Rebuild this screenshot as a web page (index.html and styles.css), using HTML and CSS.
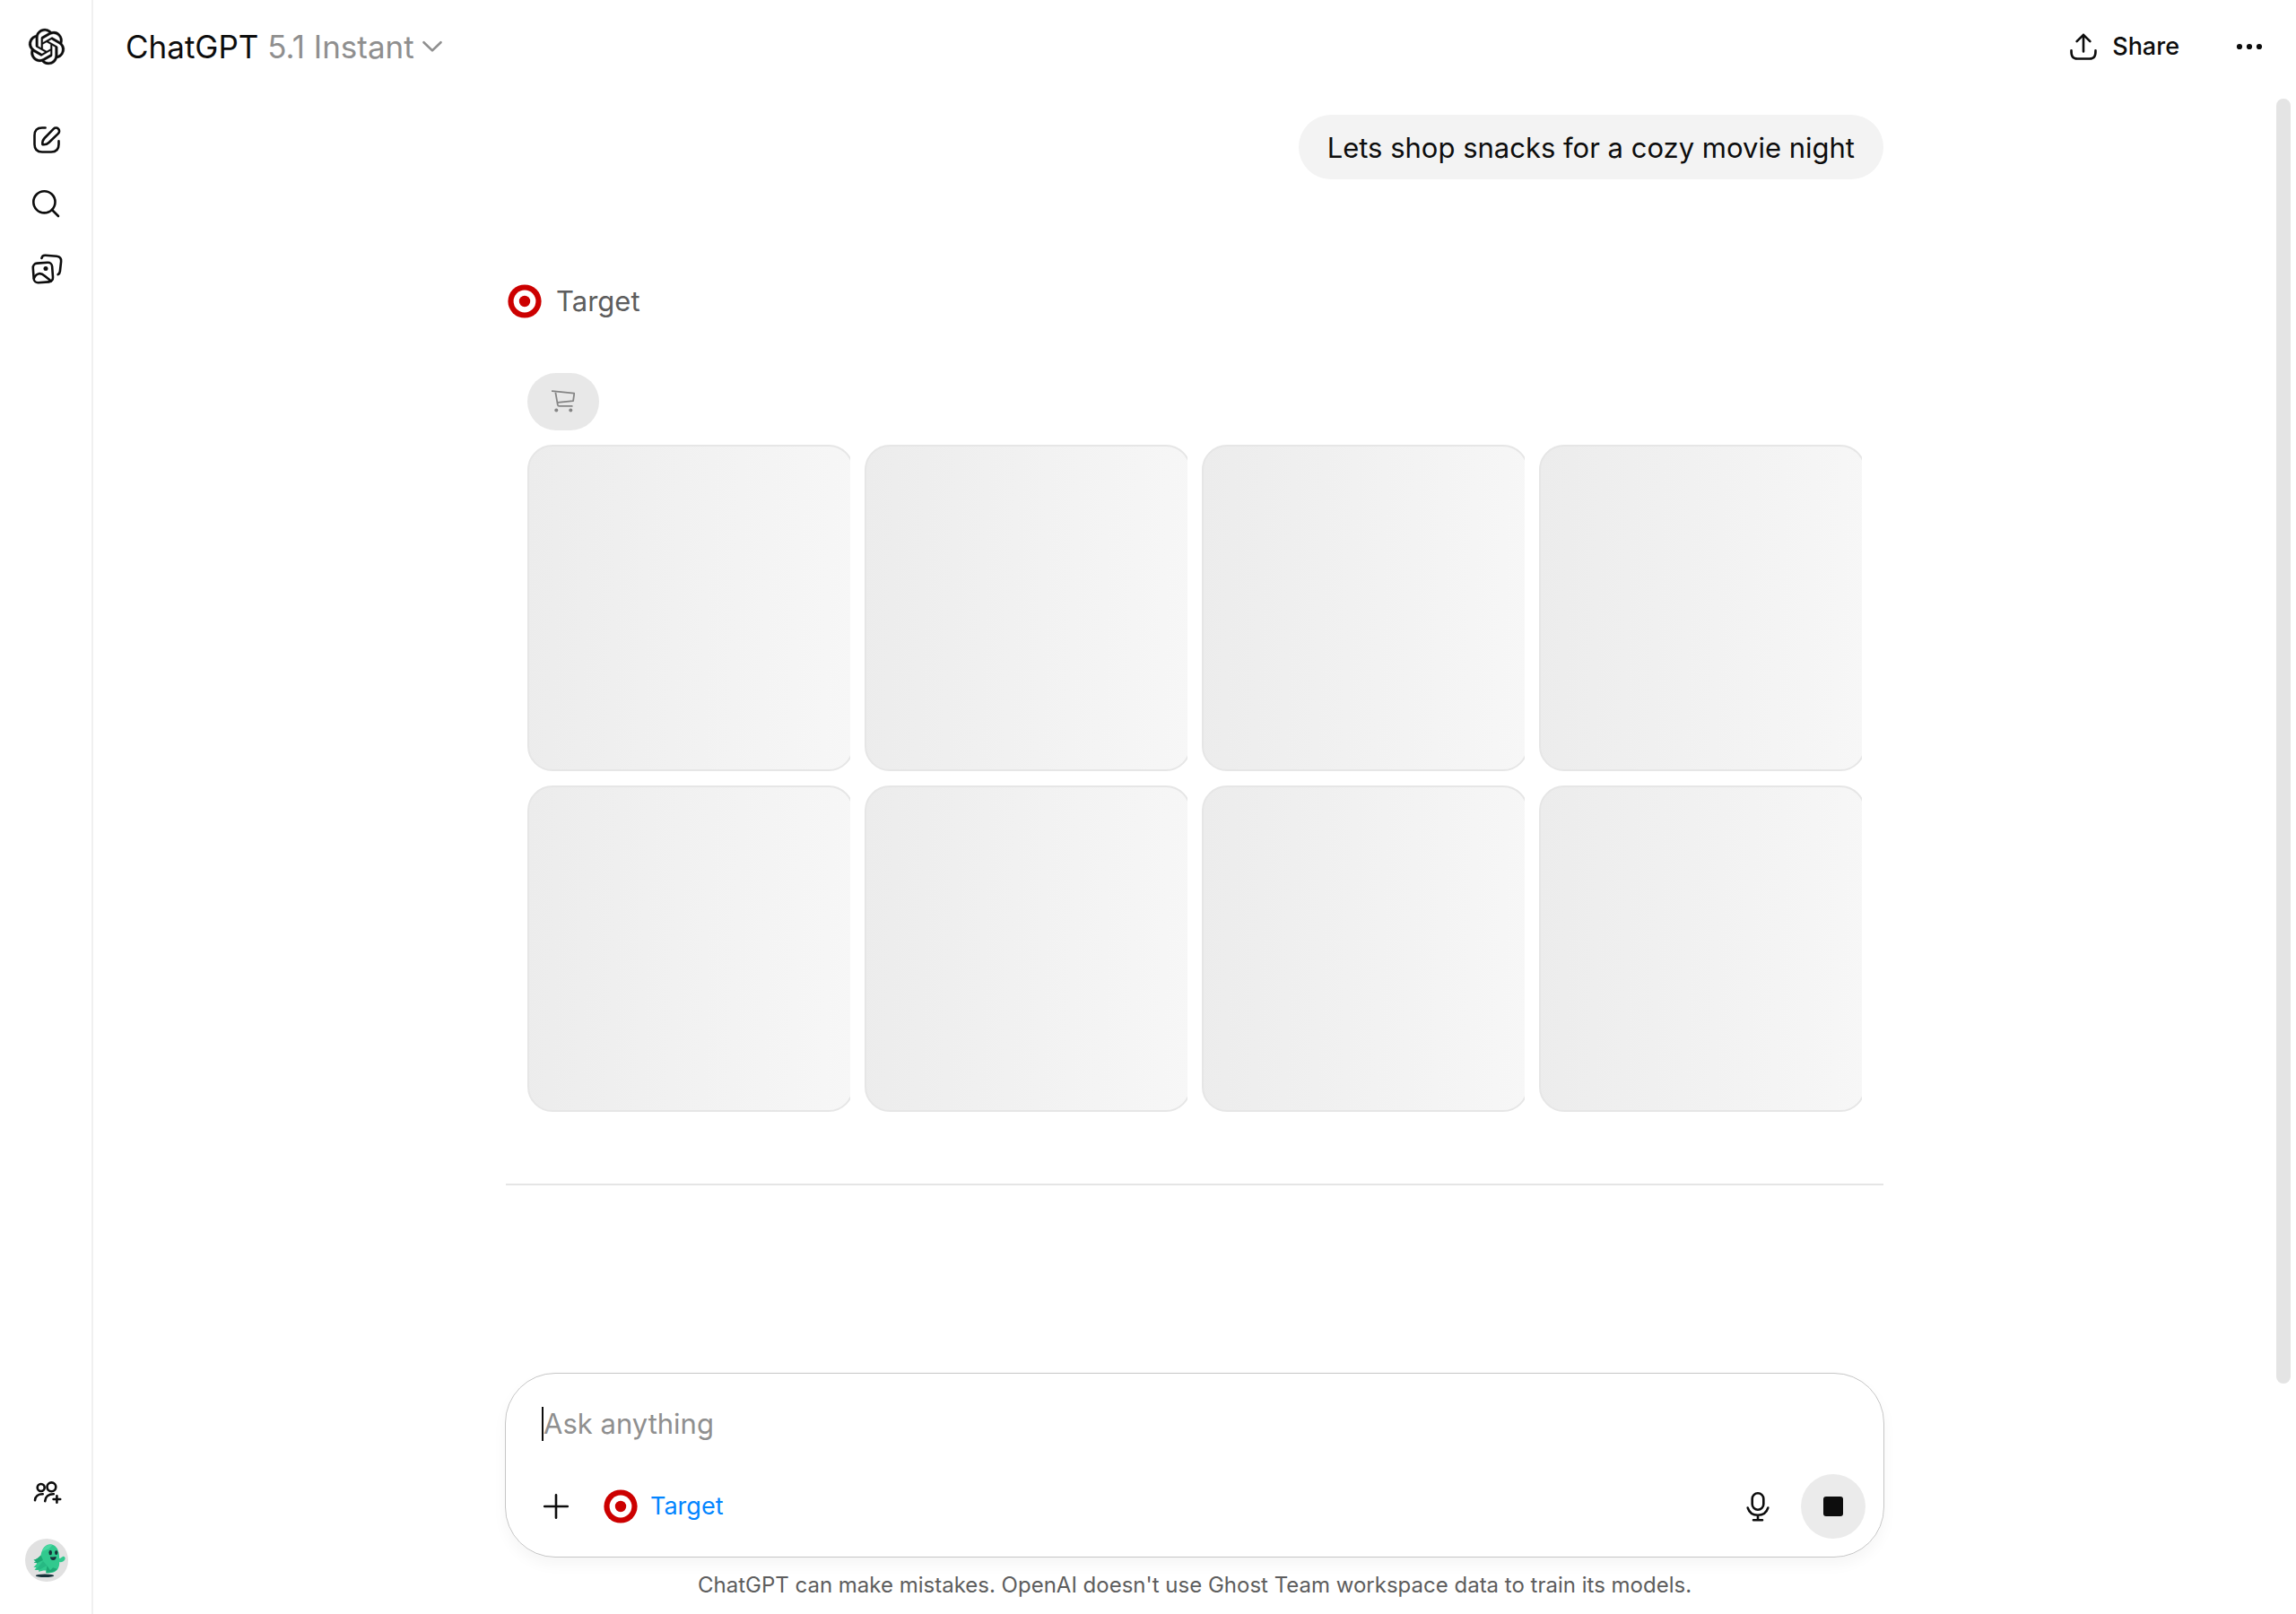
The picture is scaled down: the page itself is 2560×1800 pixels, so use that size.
FILE: index.html
```html
<!DOCTYPE html>
<html lang="en">
<head>
<meta charset="utf-8">
<meta name="viewport" content="width=device-width, initial-scale=1">
<title>ChatGPT</title>
<link rel="stylesheet" href="styles.css">
</head>
<body>
<svg class="defs" aria-hidden="true">
  <symbol id="bullseye" viewBox="0 0 38 38">
    <circle cx="19" cy="19" r="18.6" fill="#cc0000"/>
    <circle cx="19" cy="19" r="12.4" fill="#fff"/>
    <circle cx="19" cy="19" r="6.2" fill="#cc0000"/>
  </symbol>
</svg>
<div class="app">
  <nav class="sidebar" aria-label="Main">
    <a class="home" href="#" aria-label="Home">
      <svg class="logo" viewBox="0 0 24 24" fill="currentColor"><path d="M22.2819 9.8211a5.9847 5.9847 0 0 0-.5157-4.9108 6.0462 6.0462 0 0 0-6.5098-2.9A6.0651 6.0651 0 0 0 4.9807 4.1818a5.9847 5.9847 0 0 0-3.9977 2.9 6.0462 6.0462 0 0 0 .7427 7.0966 5.98 5.98 0 0 0 .511 4.9107 6.051 6.051 0 0 0 6.5146 2.9001A5.9847 5.9847 0 0 0 13.2599 24a6.0557 6.0557 0 0 0 5.7718-4.2058 5.9894 5.9894 0 0 0 3.9977-2.9001 6.0557 6.0557 0 0 0-.7475-7.0729zm-9.022 12.6081a4.4755 4.4755 0 0 1-2.8764-1.0408l.1419-.0804 4.7783-2.7582a.7948.7948 0 0 0 .3927-.6813v-6.7369l2.02 1.1686a.071.071 0 0 1 .038.052v5.5826a4.504 4.504 0 0 1-4.4945 4.4944zm-9.6607-4.1254a4.4708 4.4708 0 0 1-.5346-3.0137l.142.0852 4.783 2.7582a.7712.7712 0 0 0 .7806 0l5.8428-3.3685v2.3324a.0804.0804 0 0 1-.0332.0615L9.74 19.9502a4.4992 4.4992 0 0 1-6.1408-1.6464zM2.3408 7.8956a4.485 4.485 0 0 1 2.3655-1.9728V11.6a.7664.7664 0 0 0 .3879.6765l5.8144 3.3543-2.0201 1.1685a.0757.0757 0 0 1-.071 0l-4.8303-2.7865A4.504 4.504 0 0 1 2.3408 7.872zm16.5963 3.8558L13.1038 8.364 15.1192 7.2a.0757.0757 0 0 1 .071 0l4.8303 2.7913a4.4944 4.4944 0 0 1-.6765 8.1042v-5.6772a.79.79 0 0 0-.407-.667zm2.0107-3.0231l-.142-.0852-4.7735-2.7818a.7759.7759 0 0 0-.7854 0L9.409 9.2297V6.8974a.0662.0662 0 0 1 .0284-.0615l4.8303-2.7866a4.4992 4.4992 0 0 1 6.6802 4.66zM8.3065 12.863l-2.02-1.1638a.0804.0804 0 0 1-.038-.0567V6.0742a4.4992 4.4992 0 0 1 7.3757-3.4537l-.142.0805L8.704 5.459a.7948.7948 0 0 0-.3927.6813zm1.0976-2.3654l2.602-1.4998 2.6069 1.4998v2.9994l-2.5974 1.4997-2.6067-1.4997Z"/></svg>
    </a>
    <div class="side-group">
      <button class="side-button" type="button" aria-label="New chat">
        <svg class="icon" viewBox="0 0 36 36"><path d="M16.6 4.5H13C7.2 4.5 4.5 7.2 4.5 13v10c0 5.800 2.700 8.500 8.500 8.500h10c5.800 0 8.500-2.700 8.500-8.500v-3.600"/><path d="M13.400 23.100c-.3-3 .5-5.300 2.300-7.100L25.800 5.700a3.650 3.650 0 0 1 5.200 5.200L20.500 21c-1.900 1.800-4.100 2.500-7.100 2.100Z"/></svg>
      </button>
      <button class="side-button" type="button" aria-label="Search chats">
        <svg class="icon" viewBox="0 0 36 36"><circle cx="15.400" cy="15.300" r="12.100"/><path d="m24 24 7 7"/></svg>
      </button>
      <button class="side-button" type="button" aria-label="Library">
        <svg class="icon" viewBox="0 0 36 36"><rect x="3.200" y="11.200" width="21.400" height="21.600" rx="4.800" transform="rotate(-4 13.900 22)"/><path d="M4 28.200c1-2.300 3.200-4.600 5.400-5 2.600-.5 4.600.9 6.800 2.700l6.800 5.500M12.400 6c.4-2 1.700-3.500 4.300-3.300l12.500 1.100c3.700.4 5.200 2.300 4.900 5.800l-1.200 10.900c-.2 2-1 3-2.300 3.600"/><circle cx="17" cy="17.400" r="2.500" class="solid"/></svg>
      </button>
    </div>
    <div class="side-group side-bottom">
      <button class="side-button" type="button" aria-label="Invite team members">
        <svg class="icon" viewBox="0 0 36 36"><circle cx="11.700" cy="13" r="4"/><circle cx="23.400" cy="12.300" r="4.900"/><path d="M5 27.200c.3-4.300 3.700-7 8.700-6.900M16.200 28.200c.3-5 4-8 9.600-7.900M29.400 22.200v7.600M25.600 26h7.600"/></svg>
      </button>
      <button class="side-button" type="button" aria-label="Account">
        <svg class="avatar" viewBox="0 0 48 48">
          <circle cx="24" cy="24" r="24" fill="#e1e1e1"/>
          <ellipse cx="22" cy="41.200" rx="10.200" ry="1.700" fill="#17333a"/>
          <path d="M17.500 18.500c-2.200 2.600-4.600 4.500-8 5.200l2.700 1.600-2.500 1.300 3.600.6c-1 2-2.600 3.400-4 4.700l3.200.1-2 3 4.500-.4.400 2.400c3.400-1.200 5.600-1.800 8.300-1.200l-.3 2.700c4.700.1 9.700-.5 12.600-4 1.800-2.500 2.200-5.400 2.300-8.400 2.900.3 5.500-.9 6.200-3.100.7-2.100-.8-3.700-2.500-3.100-1.200.4-1.800 1.900-3.800 2.100 0-6.500-1.600-12.300-6.400-14.800C25 4.200 19 9.500 17.500 18.500Z" fill="#31c98e"/>
          <path d="M17.500 18.500c-2.200 2.600-4.600 4.500-8 5.200l2.700 1.600-2.500 1.300 3.600.6 6.700-3.200ZM24.500 30l-1.300 7.800c4.700.1 9.700-.5 12.600-4l-4.800-1.600-3 3Z" fill="#1da874"/>
          <path d="m20 25-8.200 10 4.500-.4 8.200-4.600Z" fill="#27b883"/>
          <path d="M19 14c1-5 6-8.500 11.500-7l-4 4.500Z" fill="#4ad8a2"/>
          <ellipse cx="28.200" cy="15.500" rx="1.800" ry="2.700" fill="#17333a"/>
          <ellipse cx="34.700" cy="15.500" rx="1.700" ry="2.600" fill="#17333a"/>
          <path d="M28 20.200c2.200.6 4.600.5 6.600-.1.200 2.500-1.200 4-3.300 4s-3.400-1.700-3.300-3.900Z" fill="#17333a"/>
        </svg>
      </button>
    </div>
  </nav>

  <main class="main">
    <header class="header">
      <button class="model" type="button">
        <span>ChatGPT <span class="model-version">5.1 Instant</span></span>
        <svg class="chevron" viewBox="0 0 24 24"><path d="m2.500 7.200 9.500 9.200 9.500-9.200"/></svg>
      </button>
      <div class="header-actions">
        <button class="share" type="button">
          <svg class="icon" viewBox="0 0 36 36"><path d="M18 23.500V4.800M10.600 12.200 18 4.800l7.400 7.400M4.500 22.300c-.2 6.300 1.400 9.200 6.700 9.200h13.600c5.300 0 6.900-2.900 6.700-9.200"/></svg>
          Share
        </button>
        <button class="more" type="button" aria-label="More options">
          <svg class="icon" viewBox="0 0 36 36"><g class="solid"><circle cx="7" cy="18" r="3.100"/><circle cx="18" cy="18" r="3.100"/><circle cx="29" cy="18" r="3.100"/></g></svg>
        </button>
      </div>
    </header>

    <section class="thread">
      <div class="column">
        <p class="message">Lets shop snacks for a cozy movie night</p>
        <article class="reply">
          <div class="source">
            <svg class="bullseye"><use href="#bullseye"/></svg>
            <span>Target</span>
          </div>
          <div class="widget">
            <button class="cart" type="button" aria-label="Cart">
              <svg class="cart-icon" viewBox="0 0 26 26"><path d="m.6 1.200 24.700 2.500-1.200 8.400-17.300 1.700M4.200 1.700l2.600 14.700c.2 1 .7 1.500 1.700 1.500h14.300"/><g class="solid"><circle cx="5.300" cy="22.600" r="2"/><circle cx="21.300" cy="22.600" r="2"/></g></svg>
            </button>
            <div class="grid">
              <div class="cell"><div class="skeleton"></div></div>
              <div class="cell"><div class="skeleton"></div></div>
              <div class="cell"><div class="skeleton"></div></div>
              <div class="cell"><div class="skeleton"></div></div>
              <div class="cell"><div class="skeleton"></div></div>
              <div class="cell"><div class="skeleton"></div></div>
              <div class="cell"><div class="skeleton"></div></div>
              <div class="cell"><div class="skeleton"></div></div>
            </div>
          </div>
        </article>
        <hr class="divider">
      </div>
    </section>

    <form class="composer">
      <div class="prompt">
        <span class="caret"></span>
        <input class="prompt-input" type="text" placeholder="Ask anything" aria-label="Message">
      </div>
      <div class="tools">
        <button class="tool" type="button" aria-label="Add">
          <svg class="icon" viewBox="0 0 36 36"><path d="M18 5.200v25.600M5.200 18h25.600"/></svg>
        </button>
        <button class="connector" type="button">
          <svg class="bullseye"><use href="#bullseye"/></svg>
          Target
        </button>
        <button class="tool dictate" type="button" aria-label="Dictate">
          <svg class="icon" viewBox="-2 0 36 36"><rect x="9.700" y="3.200" width="12.600" height="18.600" rx="6.300"/><path d="M4.700 19.600C6.300 24.600 10.600 27.800 16 27.800s9.700-3.200 11.300-8.200M16 28v5M11 33.200h10"/></svg>
        </button>
        <button class="stop" type="button" aria-label="Stop"><span class="stop-mark"></span></button>
      </div>
    </form>
    <p class="disclaimer">ChatGPT can make mistakes. OpenAI doesn't use Ghost Team workspace data to train its models.</p>
    <div class="scrollbar"></div>
  </main>
</div>
</body>
</html>
```
FILE: styles.css
```css
* {
  box-sizing: border-box;
}

body {
  margin: 0;
  background: #fff;
  color: #0d0d0d;
  font-family: Inter, "Liberation Sans", sans-serif;
  font-size: 31px;
  line-height: 48px;
}

button {
  display: flex;
  align-items: center;
  justify-content: center;
  margin: 0;
  padding: 0;
  border: 0;
  background: none;
  color: inherit;
  font: inherit;
  cursor: pointer;
}

p {
  margin: 0;
}

.defs {
  display: none;
}

.app {
  display: grid;
  grid-template-columns: 104px 1fr;
  min-height: 100vh;
}

/* Icons */

.icon,
.chevron,
.cart-icon {
  width: 36px;
  height: 36px;
  fill: none;
  stroke: currentColor;
  stroke-width: 2.6;
  stroke-linecap: round;
  stroke-linejoin: round;
}

.solid {
  fill: currentColor;
  stroke: none;
}

.bullseye {
  width: 38px;
  height: 38px;
}

/* Sidebar */

.sidebar {
  display: flex;
  flex-direction: column;
  padding-bottom: 24px;
  border-right: 2px solid #f0f0f0;
}

.home {
  display: flex;
  align-items: center;
  justify-content: center;
  height: 104px;
  margin-bottom: 16px;
  padding-left: 2px;
  color: inherit;
}

.logo {
  width: 40px;
  height: 40px;
  stroke: currentColor;
  stroke-width: 0.2;
  overflow: visible;
}

.side-group {
  display: flex;
  flex-direction: column;
}

.side-button {
  height: 72px;
  padding-left: 2px;
}

.side-bottom {
  gap: 4px;
  margin-top: auto;
}

.avatar {
  width: 48px;
  height: 48px;
}

/* Header */

.main {
  position: relative;
  display: flex;
  flex-direction: column;
  min-width: 0;
}

.header {
  display: flex;
  align-items: center;
  justify-content: space-between;
  height: 104px;
  padding: 0 34px 0 36px;
}

.model {
  gap: 8px;
  font-size: 35px;
}

.model-version {
  color: #8f8f8f;
}

.chevron {
  width: 24px;
  height: 24px;
  color: #8f8f8f;
}

.header-actions {
  display: flex;
  align-items: center;
  gap: 60px;
}

.share {
  gap: 14px;
  font-size: 27px;
  font-weight: 500;
}

/* Conversation */

.thread {
  flex: 1;
  padding: 24px 48px;
}

.column {
  display: flex;
  flex-direction: column;
  max-width: 1536px;
  margin: 0 auto;
}

.message {
  align-self: flex-end;
  padding: 13px 32px 11px;
  border-radius: 36px;
  background: #f3f3f3;
}

.reply {
  margin-top: 112px;
}

.source {
  display: flex;
  align-items: center;
  gap: 16px;
  padding-left: 2px;
  color: #5d5d5d;
}

.widget {
  display: flex;
  flex-direction: column;
  gap: 16px;
  margin-top: 56px;
  padding: 0 24px;
}

.cart {
  width: 80px;
  height: 64px;
  border-radius: 32px;
  background: #e8e8e8;
  color: #858585;
}

.cart-icon {
  width: 26px;
  height: 26px;
  stroke-width: 1.8;
}

.grid {
  display: grid;
  grid-template-columns: repeat(4, 1fr);
  gap: 16px;
}

.cell {
  overflow: hidden;
}

/* Each placeholder runs a little past its cell, which trims its right edge. */
.skeleton {
  width: calc(100% + 4px);
  aspect-ratio: 1;
  border: 2px solid #e6e6e6;
  border-radius: 28px;
  background: linear-gradient(92deg, #ececec, #f7f7f7);
}

.divider {
  width: 100%;
  height: 2px;
  margin: 80px 0 0;
  border: 0;
  background: #e5e5e5;
}

/* Composer */

.composer {
  width: calc(100% - 96px);
  max-width: 1538px;
  margin: 0 auto;
  padding: 32px 20px 20px;
  border: 1px solid #c6c6c6;
  border-radius: 56px;
  box-shadow: 0 8px 16px rgba(0, 0, 0, 0.04);
}

.prompt {
  display: flex;
  align-items: center;
  height: 48px;
  margin-bottom: 32px;
  padding-left: 20px;
}

.caret {
  width: 2px;
  height: 38px;
  background: #0d0d0d;
}

.prompt-input {
  flex: 1;
  min-width: 0;
  padding: 0;
  border: 0;
  outline: 0;
  background: none;
  color: inherit;
  font: inherit;
}

.prompt-input::placeholder {
  color: #8f8f8f;
  opacity: 1;
}

.tools {
  display: flex;
  align-items: center;
}

.tool {
  width: 72px;
  height: 72px;
}

.connector {
  gap: 14px;
  margin-left: 17px;
  color: #0285ff;
  font-size: 27px;
}

.dictate {
  margin-left: auto;
  margin-right: 12px;
}

.stop {
  width: 72px;
  height: 72px;
  border-radius: 50%;
  background: #ebebeb;
}

.stop-mark {
  width: 22px;
  height: 22px;
  border-radius: 3px;
  background: #0d0d0d;
}

.disclaimer {
  padding: 15px 0 16px;
  color: #5d5d5d;
  font-size: 24px;
  line-height: 32px;
  text-align: center;
}

.scrollbar {
  position: absolute;
  top: 110px;
  right: 6px;
  bottom: 257px;
  width: 16px;
  border-radius: 8px;
  background: #e4e4e4;
}
```
